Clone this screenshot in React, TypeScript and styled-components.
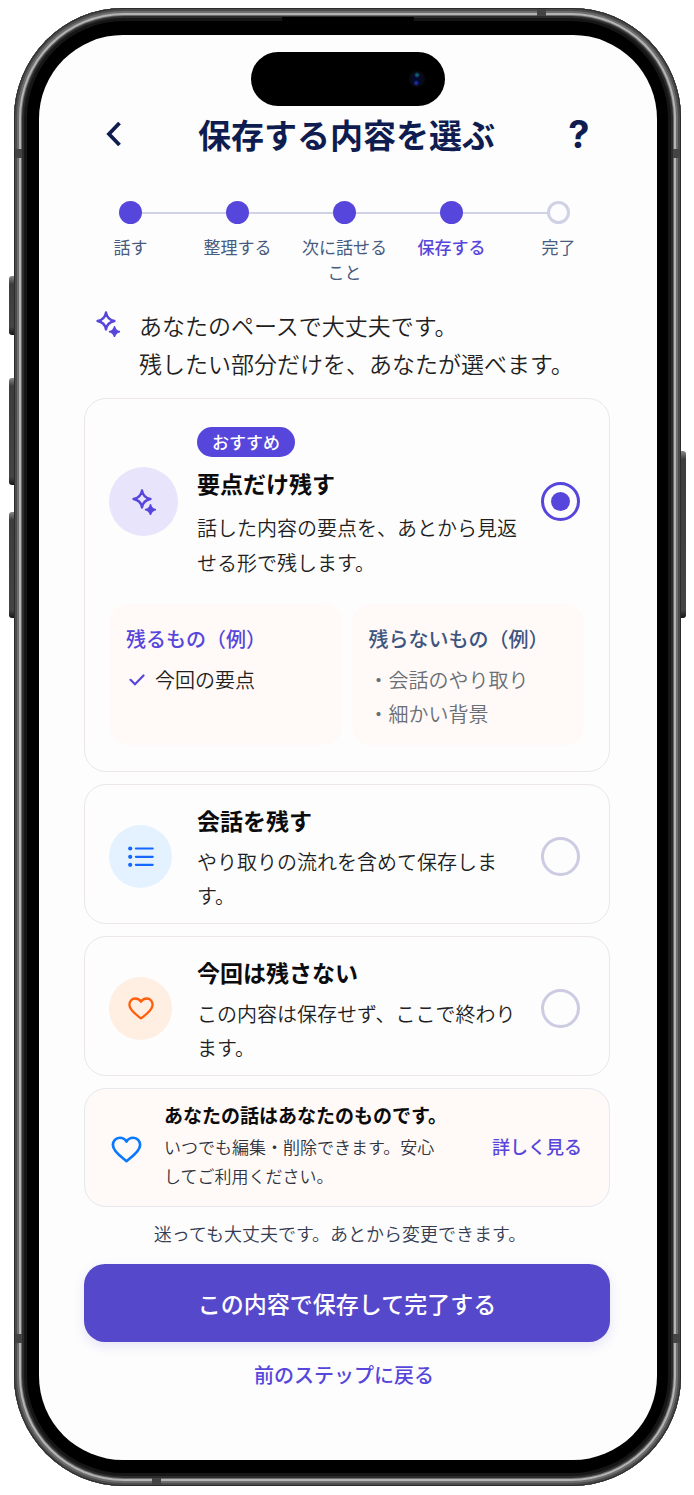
import React, { useState } from "react";
import styled, { createGlobalStyle, css } from "styled-components";

const color = {
  navy: "#0f1c50",
  primary: "#5746dc",
  button: "#5648cb",
  slate: "#475b80",
  ink: "#0c0c0e",
  body: "#1f1f23",
  track: "#cfd1e6",
  cream: "#fffaf7",
  line: "#ece6e7",
};

const GlobalStyle = createGlobalStyle`
  *, *::before, *::after { box-sizing: border-box; }
  body {
    margin: 0;
    background: #fff;
    color: ${color.ink};
    font-family: "Noto Sans CJK JP", "Noto Sans", sans-serif;
  }
  h1, h2, h3, p, ul, ol { margin: 0; padding: 0; }
  ul, ol { list-style: none; }
  button { font-family: inherit; border: 0; background: none; padding: 0; cursor: pointer; }
`;

const Phone = styled.div`
  position: relative;
  margin: 8px 13px 9px 14px;
  padding: 27px 24px 26px 25px;
  border-radius: 110px;
  background: #000;
  box-shadow:
    inset 0 0 0 1px #2b2b2b,
    inset 0 0 0 3px #4c4c4c,
    inset 0 0 0 5px #6e6e6e,
    inset 0 0 0 7px #b4b4b4,
    inset 0 0 0 8px #6a6a6a,
    inset 0 0 0 10px #2c2c2c,
    inset 0 0 0 13px #161616;
`;

const SideKey = styled.span<{ $side: "left" | "right"; $top: number; $height: number }>`
  position: absolute;
  top: ${(p) => p.$top}px;
  ${(p) => p.$side}: -5px;
  width: 5px;
  height: ${(p) => p.$height}px;
  border-radius: ${(p) => (p.$side === "left" ? "3px 0 0 3px" : "0 3px 3px 0")};
  background: linear-gradient(#8a8a8a, #3d3d3d 8px, #444 calc(100% - 8px), #161616);
`;

const Band = styled.span<{ $edge: "left" | "right" | "top" | "bottom"; $from: "top" | "bottom" | "left" | "right"; $at: number }>`
  position: absolute;
  ${(p) => p.$edge}: 1px;
  ${(p) => p.$from}: ${(p) => p.$at}px;
  ${(p) =>
    p.$edge === "left" || p.$edge === "right"
      ? css`width: 7px; height: 9px;`
      : css`width: 9px; height: 7px;`}
  background: #444;
`;

const Earpiece = styled.span`
  position: absolute;
  top: 9px;
  left: 50%;
  width: 132px;
  height: 5px;
  transform: translateX(-50%);
  border-radius: 0 0 4px 4px;
  background: #000;
`;

const Screen = styled.main`
  display: flex;
  flex-direction: column;
  padding: 17px 0 70px;
  border-radius: 84px;
  background: #fdfdfd;
`;

const Island = styled.div`
  display: flex;
  align-items: center;
  justify-content: flex-end;
  align-self: center;
  width: 194px;
  height: 54px;
  padding-right: 20px;
  border-radius: 27px;
  background: #000;
`;

const Lens = styled.span`
  width: 16px;
  height: 16px;
  border-radius: 50%;
  background:
    radial-gradient(circle at 50% 25%, #0f5c70 0 1px, transparent 3px),
    radial-gradient(circle at 45% 75%, #1a2ba0 0 1px, transparent 3px),
    radial-gradient(circle, #04082a 0 5px, #0a0a0c 7px);
`;

const Header = styled.header`
  display: flex;
  align-items: center;
  justify-content: space-between;
  margin-top: 7px;
  padding: 0 62px 0 59px;
  height: 42px;
`;

const Title = styled.h1`
  font-size: 33px;
  line-height: 42px;
  font-weight: 700;
  color: ${color.navy};
`;

const HeaderButton = styled.button`
  display: flex;
  align-items: center;
  justify-content: center;
  width: 32px;
  height: 42px;
  font-family: Inter, "Liberation Sans", sans-serif;
  font-size: 38px;
  line-height: 42px;
  font-weight: 700;
  color: ${color.navy};
`;

const Steps = styled.ol`
  display: grid;
  grid-template-columns: repeat(5, 1fr);
  margin-top: 46px;
  padding: 0 45px 0 38px;
`;

const Step = styled.li<{ $current?: boolean }>`
  position: relative;
  display: flex;
  flex-direction: column;
  align-items: center;
  gap: 10px;
  padding: 0 8px;
  font-size: 17px;
  line-height: 25px;
  text-align: center;
  font-weight: ${(p) => (p.$current ? 500 : 400)};
  color: ${(p) => (p.$current ? color.primary : color.slate)};

  li + &::before {
    content: "";
    position: absolute;
    top: 11px;
    left: calc(-50% + 11px);
    width: calc(100% - 22px);
    height: 2px;
    background: ${color.track};
  }
`;

const Dot = styled.span<{ $filled: boolean }>`
  position: relative;
  width: 23px;
  height: 23px;
  border-radius: 50%;
  z-index: 1;
  ${(p) =>
    p.$filled
      ? css`background: ${color.primary};`
      : css`border: 3px solid ${color.track};`}
`;

const Intro = styled.div`
  display: flex;
  gap: 19px;
  margin-top: 22px;
  padding: 0 47px 0 57px;

  svg { margin-top: 5px; flex: none; }
`;

const IntroText = styled.p`
  font-size: 23px;
  line-height: 38px;
  font-weight: 350;
  color: ${color.body};
`;

const Content = styled.form`
  display: flex;
  flex-direction: column;
  gap: 12px;
  margin-top: 16px;
  padding: 0 47px 0 45px;
`;

const Card = styled.section`
  border: 1px solid ${color.line};
  border-radius: 22px;
  background: #fdfdfd;
`;

const OptionLabel = styled.label<{ $large?: boolean }>`
  display: flex;
  align-items: center;
  padding: ${(p) => (p.$large ? "24px 29px 24px 24px" : "15px 29px 10px 24px")};
  cursor: pointer;
`;

const IconSlot = styled.span`
  flex: none;
  width: 88px;
`;

const IconCircle = styled.span<{ $bg: string; $size: number }>`
  display: flex;
  align-items: center;
  justify-content: center;
  width: ${(p) => p.$size}px;
  height: ${(p) => p.$size}px;
  border-radius: 50%;
  background: ${(p) => p.$bg};
`;

const OptionText = styled.span`
  display: flex;
  flex-direction: column;
  align-items: flex-start;
  flex: 1;
  min-width: 0;
  padding-top: 4px;
`;

const Badge = styled.span`
  margin-bottom: 10px;
  padding: 0 15px;
  border-radius: 15px;
  background: ${color.primary};
  color: #fff;
  font-size: 17px;
  line-height: 30px;
  font-weight: 500;
`;

const OptionTitle = styled.span`
  font-size: 23px;
  line-height: 32px;
  font-weight: 700;
`;

const OptionDescription = styled.span<{ $large?: boolean }>`
  margin-top: ${(p) => (p.$large ? 11 : 9)}px;
  font-size: 20px;
  line-height: ${(p) => (p.$large ? 35 : 34)}px;
  font-weight: 350;
  color: ${color.body};
`;

const Radio = styled.input`
  appearance: none;
  display: grid;
  place-items: center;
  flex: none;
  width: 39px;
  height: 39px;
  margin: 0 0 0 12px;
  border: 3px solid #cbcbe2;
  border-radius: 50%;
  cursor: pointer;

  &:checked { border-color: ${color.primary}; }
  &:checked::before {
    content: "";
    width: 19px;
    height: 19px;
    border-radius: 50%;
    background: ${color.primary};
  }
`;

const Examples = styled.div`
  display: grid;
  grid-template-columns: 1fr 1fr;
  gap: 10px;
  padding: 0 25px 26px 24px;
`;

const ExampleBox = styled.div`
  padding: 20px 17px 14px;
  border-radius: 18px;
  background: ${color.cream};
`;

const ExampleTitle = styled.h2<{ $tone: string }>`
  font-size: 20px;
  line-height: 30px;
  font-weight: 500;
  color: ${(p) => p.$tone};
`;

const ExampleList = styled.ul<{ $muted?: boolean }>`
  margin-top: 9px;
  font-size: 20px;
  line-height: 34px;
  font-weight: 350;
  color: ${(p) => (p.$muted ? "#6a6e75" : color.body)};
`;

const ExampleItem = styled.li`
  display: flex;
  align-items: center;

  svg { margin: 0 10px 0 3px; }
`;

const Notice = styled.aside`
  display: flex;
  align-items: center;
  padding: 12px 27px 16px 26px;
  border: 1px solid #e6e7ef;
  border-radius: 22px;
  background: ${color.cream};

  svg { margin-top: 8px; }
`;

const NoticeText = styled.div`
  flex: 1;
  min-width: 0;
  margin: 0 44px 0 22px;
`;

const NoticeTitle = styled.h2`
  font-size: 19px;
  line-height: 28px;
  font-weight: 700;
  white-space: nowrap;
`;

const NoticeBody = styled.p`
  margin-top: 3px;
  font-size: 17px;
  line-height: 29px;
  font-weight: 350;
  color: #2f333d;
`;

const NoticeLink = styled.a`
  font-size: 18px;
  line-height: 28px;
  font-weight: 500;
  color: ${color.primary};
  text-decoration: none;
  white-space: nowrap;
`;

const Hint = styled.p`
  margin-top: 1px;
  padding-right: 14px;
  font-size: 18px;
  line-height: 26px;
  font-weight: 350;
  text-align: center;
  color: #343b52;
`;

const SubmitButton = styled.button`
  height: 78px;
  margin-top: 6px;
  border-radius: 21px;
  background: ${color.button};
  box-shadow: 0 4px 12px rgba(86, 72, 203, 0.14);
  color: #fff;
  font-size: 23px;
  line-height: 34px;
  font-weight: 500;
`;

const BackButton = styled.button`
  align-self: center;
  margin: 6px 6px 0 0;
  font-size: 20px;
  line-height: 30px;
  font-weight: 500;
  color: ${color.primary};
`;

const SparkleIcon = () => (
  <svg width="24" height="26" viewBox="0 0 24 26" fill="none" aria-hidden="true">
    <path
      d="M10 1.6C10.8 6.4 13.4 9.1 18.4 10C13.4 10.9 10.8 13.6 10 18.4C9.2 13.6 6.6 10.9 1.6 10C6.6 9.1 9.2 6.4 10 1.6Z"
      stroke={color.primary}
      strokeWidth="2.5"
      strokeLinejoin="round"
    />
    <path
      d="M18.5 15.8C19.1 18.6 20.6 20 23.4 20.6C20.6 21.2 19.1 22.6 18.5 25.4C17.9 22.6 16.4 21.2 13.6 20.6C16.4 20 17.9 18.6 18.5 15.8Z"
      fill={color.primary}
      stroke={color.primary}
      strokeWidth="1.6"
      strokeLinejoin="round"
    />
  </svg>
);

const ListIcon = () => (
  <svg width="26" height="22" viewBox="0 0 26 22" aria-hidden="true">
    {[2.5, 10.8, 18.8].map((y) => (
      <g key={y} fill="#1467ff">
        <circle cx="2.2" cy={y} r="2.1" />
        <rect x="6.8" y={y - 1.1} width="19" height="2.2" rx="1.1" />
      </g>
    ))}
  </svg>
);

const HeartIcon = ({ width, stroke }: { width: number; stroke: string }) => (
  <svg width={width} height={Math.round(width * 0.88)} viewBox="0 0 26 23" fill="none" aria-hidden="true">
    <path
      d="M13 21.4C9.4 18.5 1.4 13.3 1.4 7.7C1.4 4.2 4 1.5 7.2 1.5C9.7 1.5 11.8 2.6 13 4.8C14.2 2.6 16.3 1.5 18.8 1.5C22 1.5 24.6 4.2 24.6 7.7C24.6 13.3 16.6 18.5 13 21.4Z"
      stroke={stroke}
      strokeWidth="2.3"
      strokeLinejoin="round"
    />
  </svg>
);

const CheckIcon = () => (
  <svg width="16" height="12" viewBox="0 0 16 12" fill="none" aria-hidden="true">
    <path d="M1.5 5.8L6 10.3L14.5 1.5" stroke={color.primary} strokeWidth="2.2" strokeLinecap="round" />
  </svg>
);

const BackIcon = () => (
  <svg width="16" height="26" viewBox="0 0 16 26" fill="none" aria-hidden="true">
    <path d="M13.5 2L3 13L13.5 24" stroke={color.navy} strokeWidth="3.8" />
  </svg>
);

type Choice = "summary" | "conversation" | "none";

const steps = ["話す", "整理する", "次に話せること", "保存する", "完了"];
const currentStep = 3;

type OptionProps = {
  value: Choice;
  title: string;
  description: string;
  icon: React.ReactNode;
  tint: string;
  badge?: string;
  checked: boolean;
  onSelect: (value: Choice) => void;
  children?: React.ReactNode;
};

const Option = ({ value, title, description, icon, tint, badge, checked, onSelect, children }: OptionProps) => {
  const large = Boolean(badge);
  return (
    <Card>
      <OptionLabel $large={large}>
        <IconSlot>
          <IconCircle $bg={tint} $size={large ? 69 : 63}>{icon}</IconCircle>
        </IconSlot>
        <OptionText>
          {badge && <Badge>{badge}</Badge>}
          <OptionTitle>{title}</OptionTitle>
          <OptionDescription $large={large}>{description}</OptionDescription>
        </OptionText>
        <Radio type="radio" name="save" value={value} checked={checked} onChange={() => onSelect(value)} />
      </OptionLabel>
      {children}
    </Card>
  );
};

export default function App() {
  const [choice, setChoice] = useState<Choice>("summary");

  return (
    <>
      <GlobalStyle />
      <Phone>
        <SideKey $side="left" $top={268} $height={59} />
        <SideKey $side="left" $top={370} $height={107} />
        <SideKey $side="left" $top={504} $height={106} />
        <SideKey $side="right" $top={443} $height={167} />
        <Band $edge="left" $from="top" $at={141} />
        <Band $edge="right" $from="top" $at={141} />
        <Band $edge="left" $from="bottom" $at={143} />
        <Band $edge="right" $from="bottom" $at={143} />
        <Band $edge="top" $from="right" $at={135} />
        <Band $edge="bottom" $from="left" $at={138} />
        <Earpiece />
        <Screen>
          <Island><Lens /></Island>
          <Header>
            <HeaderButton type="button" aria-label="戻る"><BackIcon /></HeaderButton>
            <Title>保存する内容を選ぶ</Title>
            <HeaderButton type="button">?</HeaderButton>
          </Header>
          <Steps>
            {steps.map((label, i) => (
              <Step key={label} $current={i === currentStep} aria-current={i === currentStep ? "step" : undefined}>
                <Dot $filled={i <= currentStep} />
                {label}
              </Step>
            ))}
          </Steps>
          <Intro>
            <SparkleIcon />
            <IntroText>
              あなたのペースで大丈夫です。
              <br />
              残したい部分だけを、あなたが選べます。
            </IntroText>
          </Intro>
          <Content onSubmit={(e) => e.preventDefault()}>
            <Option
              value="summary"
              badge="おすすめ"
              title="要点だけ残す"
              description="話した内容の要点を、あとから見返せる形で残します。"
              icon={<SparkleIcon />}
              tint="#e8e4fb"
              checked={choice === "summary"}
              onSelect={setChoice}
            >
              <Examples>
                <ExampleBox>
                  <ExampleTitle $tone={color.primary}>残るもの（例）</ExampleTitle>
                  <ExampleList>
                    <ExampleItem><CheckIcon />今回の要点</ExampleItem>
                  </ExampleList>
                </ExampleBox>
                <ExampleBox>
                  <ExampleTitle $tone="#3d5580">残らないもの（例）</ExampleTitle>
                  <ExampleList $muted>
                    <ExampleItem>・会話のやり取り</ExampleItem>
                    <ExampleItem>・細かい背景</ExampleItem>
                  </ExampleList>
                </ExampleBox>
              </Examples>
            </Option>
            <Option
              value="conversation"
              title="会話を残す"
              description="やり取りの流れを含めて保存します。"
              icon={<ListIcon />}
              tint="#e4f2ff"
              checked={choice === "conversation"}
              onSelect={setChoice}
            />
            <Option
              value="none"
              title="今回は残さない"
              description="この内容は保存せず、ここで終わります。"
              icon={<HeartIcon width={26} stroke="#ff5f0a" />}
              tint="#ffeee2"
              checked={choice === "none"}
              onSelect={setChoice}
            />
            <Notice>
              <HeartIcon width={31} stroke="#0a78ff" />
              <NoticeText>
                <NoticeTitle>あなたの話はあなたのものです。</NoticeTitle>
                <NoticeBody>いつでも編集・削除できます。安心してご利用ください。</NoticeBody>
              </NoticeText>
              <NoticeLink href="#privacy">詳しく見る</NoticeLink>
            </Notice>
            <Hint>迷っても大丈夫です。あとから変更できます。</Hint>
            <SubmitButton type="submit">この内容で保存して完了する</SubmitButton>
            <BackButton type="button">前のステップに戻る</BackButton>
          </Content>
        </Screen>
      </Phone>
    </>
  );
}
